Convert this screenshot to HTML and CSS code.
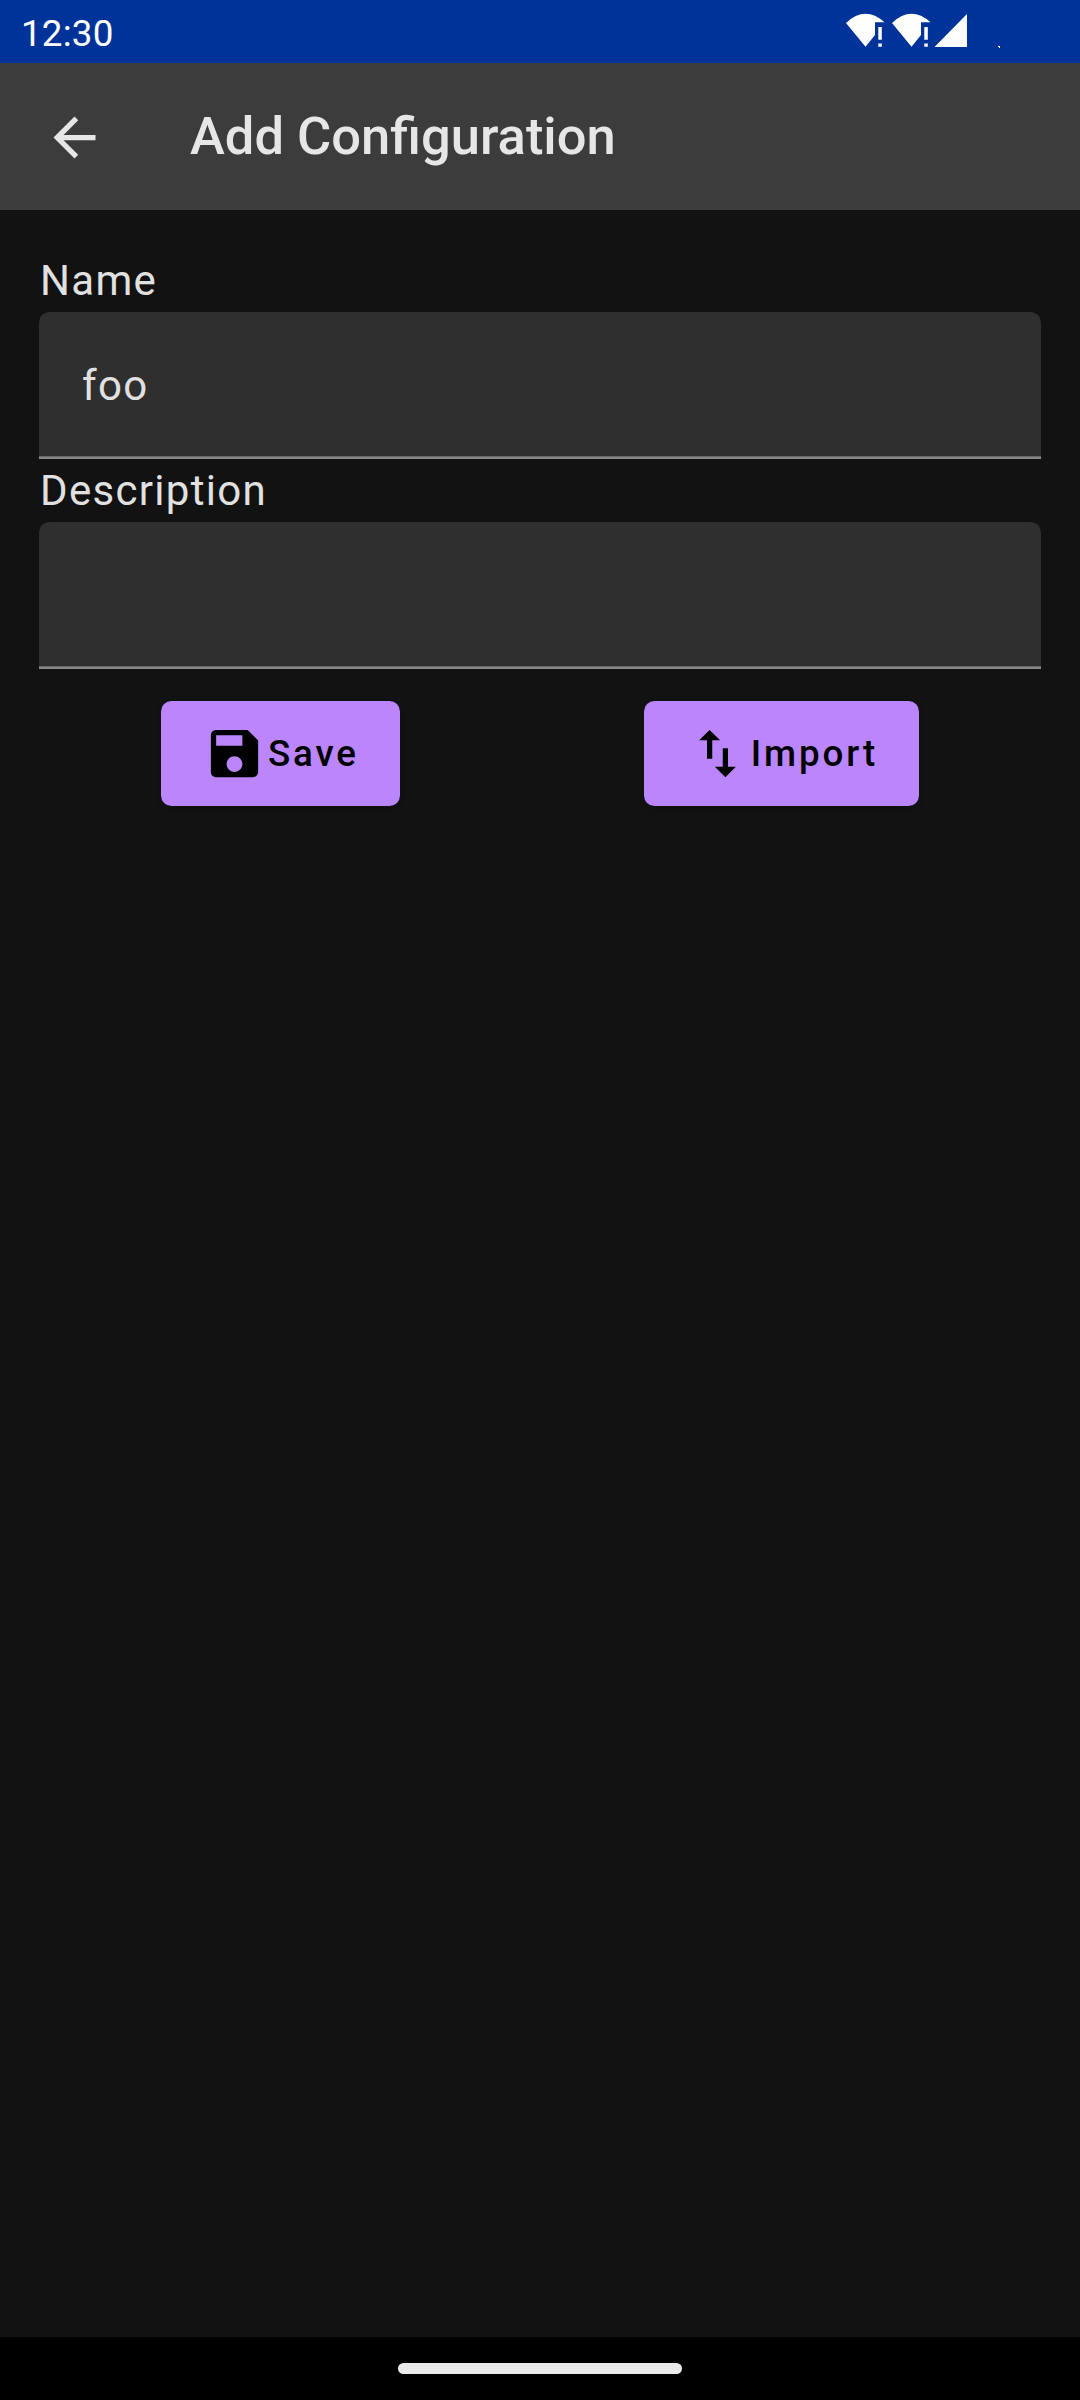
FILE: index.html
```html
<!DOCTYPE html>
<html lang="en">
<head>
<meta charset="utf-8">
<title>Add Configuration</title>
<link rel="stylesheet" href="styles.css">
</head>
<body>
<div class="screen">
  <div class="status-bar">
    <span class="clock">12:30</span>
    <svg class="status-icons" width="160" height="40" viewBox="840 10 160 40" fill="#fff" aria-hidden="true">
      <path id="wifi" d="M846 23Q865 5 884.500 22.300H875V35L865.500 46.700ZM878.300 27h3.500v12.700h-3.500zM878.300 43.500h3.500v3.200h-3.500z"/>
      <use href="#wifi" x="46"/>
      <path d="M934.500 47L967 14v33z"/>
      <path d="M998 46h2v2h-1v-1h-1z"/>
    </svg>
  </div>
  <header class="app-bar">
    <svg class="icon" viewBox="0 0 24 24" aria-label="Back"><path d="M20 11H7.830l5.590-5.590L12 4l-8 8 8 8 1.410-1.410L7.830 13H20v-2z"/></svg>
    <h1 class="title">Add Configuration</h1>
  </header>
  <main class="form">
    <label class="label" for="name">Name</label>
    <input class="field" id="name" type="text" value="foo">
    <label class="label" for="description">Description</label>
    <input class="field" id="description" type="text">
    <div class="actions">
      <button class="button" type="button">
        <svg class="icon" viewBox="0 0 24 24" aria-hidden="true"><path fill-rule="evenodd" d="M17 3H5c-1.110 0-2 .9-2 2v14c0 1.100.89 2 2 2h14c1.100 0 2-.9 2-2V7l-4-4zm-5 16c-1.660 0-3-1.340-3-3s1.340-3 3-3 3 1.340 3 3-1.340 3-3 3zm3-10H5V5h10v4z"/></svg>
        <span class="button-text">Save</span>
      </button>
      <button class="button" type="button">
        <svg class="icon" viewBox="0 0 24 24" aria-hidden="true"><path d="M16 17.010V10h-2v7.010h-3L15 21l4-3.990h-3zM9 3L5 6.990h3V14h2V6.990h3L9 3z"/></svg>
        <span class="button-text">Import</span>
      </button>
    </div>
  </main>
  <div class="nav-bar"><div class="nav-handle"></div></div>
</div>
</body>
</html>
```
FILE: styles.css
```css
* {
  box-sizing: border-box;
}

body {
  margin: 0;
  font-family: Roboto, "Noto Sans", sans-serif;
  color: #e1e1e1;
  background: #121212;
}

.screen {
  display: flex;
  flex-direction: column;
  width: 1080px;
  height: 2400px;
}

.status-bar {
  display: flex;
  justify-content: space-between;
  align-items: flex-start;
  height: 63px;
  padding: 10px 80px 0 21px;
  background: #003399;
}

.clock {
  padding-top: 1px;
  font-size: 36.75px;
  line-height: 45px;
  letter-spacing: 0.2px;
  color: #fff;
}

.app-bar {
  display: flex;
  align-items: center;
  gap: 84px;
  height: 147px;
  padding: 1px 43px 0;
  background: #3c3c3c;
  color: #e6e6e6;
}

.icon {
  flex: none;
  width: 63px;
  height: 63px;
  fill: currentColor;
}

.title {
  margin: 0;
  padding-bottom: 1px;
  font-size: 52.5px;
  font-weight: 500;
  line-height: 63px;
}

.form {
  display: flex;
  flex: 1;
  flex-direction: column;
  padding: 39px;
}

.label,
.field {
  font-size: 42px;
  line-height: 63px;
  letter-spacing: 1.3125px;
}

.label {
  padding-left: 1px;
}

.field {
  height: 147px;
  padding: 0 43px;
  border: 0;
  border-radius: 10.5px 10.5px 0 0;
  background: #2f2f2f linear-gradient(#666 1px, #888 1px) bottom / 100% 3px no-repeat;
  color: #e1e1e1;
  font-family: inherit;
  outline: 0;
}

.actions {
  display: flex;
  justify-content: space-around;
  padding-top: 32px;
}

.button {
  display: flex;
  align-items: center;
  height: 105px;
  padding: 0 41px 0 42px;
  border: 0;
  border-radius: 10.5px;
  background: #bb86fc;
  box-shadow: 0 3px 6px rgba(0, 0, 0, 0.15);
  color: #000;
  font: 500 36.75px/45px Roboto, "Noto Sans", sans-serif;
  letter-spacing: 2.85px;
}

.button-text {
  padding-left: 2px;
}

.nav-bar {
  display: flex;
  justify-content: center;
  align-items: center;
  height: 63px;
  background: #000;
}

.nav-handle {
  width: 284px;
  height: 11px;
  border-radius: 6px;
  background: #ebebeb;
}
```
